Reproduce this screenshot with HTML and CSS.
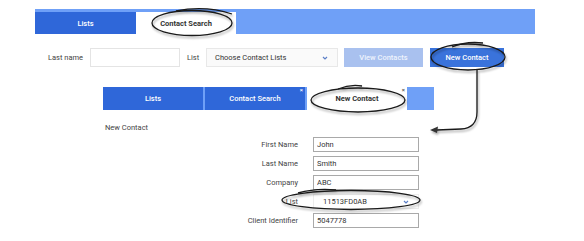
FILE: index.html
```html
<!DOCTYPE html>
<html lang="en">
<head>
    <meta charset="UTF-8">
    <title>New Contact</title>
    <link rel="stylesheet" href="styles.css">
</head>
<body>
    <div class="page">
        <div class="top-tabs">
            <div class="tab">Lists</div>
            <div class="tab active">Contact Search</div>
        </div>

        <div class="search-row">
            <label for="last-name" class="name-label">Last name</label>
            <input type="text" id="last-name" class="search-name">
            <label class="list-label">List</label>
            <div class="select search-list">
                <span>Choose Contact Lists</span>
                <svg class="chevron" width="6" height="4" viewBox="0 0 6 4"><path d="M1 1 L3 3 L5 1"/></svg>
            </div>
            <button type="button" class="btn btn-light">View Contacts</button>
            <button type="button" class="btn btn-primary">New Contact</button>
        </div>

        <div class="panel">
            <div class="inner-tabs">
                <div class="tab">Lists</div>
                <div class="tab">Contact Search<span class="close">×</span></div>
                <div class="tab active">New Contact<span class="close">×</span></div>
            </div>

            <div class="panel-title">New Contact</div>

            <div class="contact-form">
                <label>First Name</label>
                <input type="text" value="John">
                <label>Last Name</label>
                <input type="text" value="Smith">
                <label>Company</label>
                <input type="text" value="ABC">
                <label>List</label>
                <div class="select form-list">
                    <span>11513FD0AB</span>
                    <svg class="chevron" width="6" height="4" viewBox="0 0 6 4"><path d="M1 1 L3 3 L5 1"/></svg>
                </div>
                <label>Client Identifier</label>
                <input type="text" value="5047778">
            </div>
        </div>

        <!-- hand drawn callouts -->
        <svg class="marks" width="584" height="241" viewBox="0 0 584 241">
            <ellipse cx="192" cy="23" rx="40" ry="12.5"/>
            <path d="M176 11 Q205 5 232 14"/>
            <ellipse cx="468" cy="57" rx="37" ry="13"/>
            <path d="M452 47 Q466 41 483 43"/>
            <ellipse cx="358" cy="100" rx="47" ry="12"/>
            <path d="M338 89 Q350 84 362 86"/>
            <ellipse cx="351" cy="200" rx="69" ry="9.5"/>
            <path d="M298 193 Q316 188 336 190"/>
            <path d="M477 70 V112 Q477 128 461 129 L437 130"/>
            <polygon class="head" points="430,130 438,126.5 437,133"/>
        </svg>
    </div>
</body>
</html>
```

FILE: styles.css
```css
body, html {
    margin: 0;
    padding: 0;
    background-color: #ffffff;
    font-family: Roboto, "Liberation Sans", Arial, sans-serif;
    font-size: 7.5px;
    color: #444;
}

.page {
    position: relative;
    width: 584px;
    height: 241px;
    overflow: hidden;
}

.tab {
    display: flex;
    align-items: center;
    justify-content: center;
    background-color: #2f67d9;
    color: #ffffff;
    font-weight: 500;
}

.tab.active {
    background-color: #ffffff;
    color: #333;
    font-weight: 700;
}

.top-tabs {
    display: flex;
    width: 500px;
    height: 25px;
    margin: 9px 0 0 35px;
    padding-top: 3px;
    box-sizing: border-box;
    background-color: #6fa0f7;
}

.top-tabs .tab {
    width: 101px;
}

.top-tabs .tab.active {
    width: 100px;
}

.search-row {
    display: flex;
    align-items: center;
    height: 19px;
    margin-top: 14px;
    padding-left: 48px;
}

.name-label {
    width: 42px;
}

.list-label {
    width: 19px;
    margin-left: 7px;
}

input, .select {
    height: 15px;
    margin: 0;
    padding: 0 3px;
    border: 1px solid #a9a9a9;
    box-sizing: border-box;
    background-color: #ffffff;
    font-family: inherit;
    font-size: 7.5px;
    color: #333;
    outline: none;
}

.search-name {
    width: 90px;
    height: 19px;
    border-color: #e4e4e4;
}

.select {
    display: flex;
    align-items: center;
    justify-content: space-between;
}

.search-list {
    width: 132px;
    height: 19px;
    padding: 0 9px 0 8px;
    border-color: #e8e8e8;
    background-color: #fafafa;
}

.chevron path {
    fill: none;
    stroke: #5b7fc7;
    stroke-width: 1.2;
}

.btn {
    height: 19px;
    margin: 0;
    padding: 0;
    border: none;
    font-family: inherit;
    font-size: 7.5px;
    font-weight: 500;
    cursor: pointer;
}

.btn-light {
    width: 79px;
    margin-left: 6px;
    background-color: #a9c1ef;
    color: #eef3fd;
}

.btn-primary {
    width: 74px;
    margin-left: 7px;
    background-color: #3a73db;
    color: #ffffff;
}

.panel {
    width: 331px;
    margin: 20px 0 0 103px;
}

.inner-tabs {
    display: flex;
    gap: 2px;
    height: 23px;
    background-color: #6fa0f7;
}

.inner-tabs .tab {
    position: relative;
    width: 100px;
}

.close {
    position: absolute;
    top: 0;
    right: 2px;
    font-size: 6px;
    line-height: 6px;
    color: #ffffff;
}

.tab.active .close {
    color: #666;
}

.panel-title {
    margin-top: 13px;
    padding-left: 2px;
    line-height: 10px;
    color: #444;
}

.contact-form {
    display: grid;
    grid-template-columns: 195px 106px;
    grid-auto-rows: 15px;
    column-gap: 15px;
    row-gap: 4px;
    align-items: center;
    margin-top: 4px;
}

.contact-form label {
    justify-self: end;
    color: #444;
}

.form-list {
    padding: 0 9px 0 9px;
    border-color: #ededed;
}

.marks {
    position: absolute;
    top: 0;
    left: 0;
    pointer-events: none;
    filter: drop-shadow(1px 2px 1px rgba(0, 0, 0, 0.35));
}

.marks ellipse, .marks path {
    fill: none;
    stroke: #1a1a1a;
    stroke-width: 1.3;
}

.marks .head {
    fill: #333;
}
```
